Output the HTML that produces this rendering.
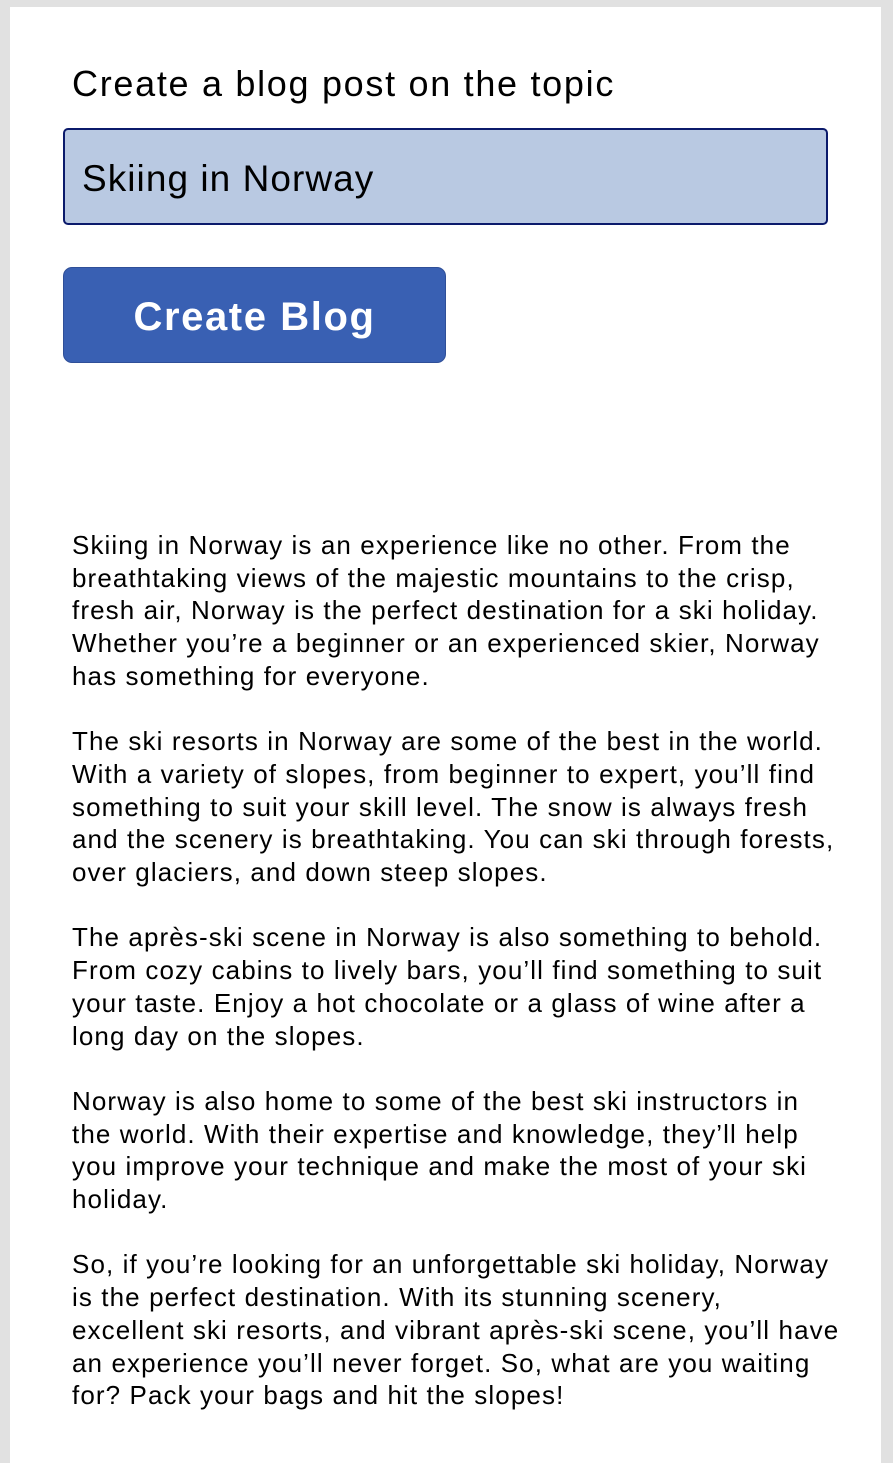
<!DOCTYPE html>
<html><head><meta charset="utf-8"><style>
html,body{margin:0;padding:0}
body{width:893px;height:1463px;background:#e1e1e1;position:relative;overflow:hidden;font-family:"Liberation Sans",sans-serif;color:#000}
.panel{position:absolute;left:10px;top:7px;width:871px;height:1456px;background:#fff}
.title{position:absolute;left:72px;top:62px;font-size:36px;line-height:44px;white-space:nowrap;letter-spacing:1.7px}
.input{position:absolute;left:63px;top:128px;width:761px;height:93px;border:2px solid #0b1a6b;border-radius:5px;background:#b9c9e2}
.input span{position:absolute;left:17px;top:27px;font-size:37px;line-height:44px;letter-spacing:1.05px;white-space:nowrap}
.btn{position:absolute;left:63px;top:267px;width:381px;height:94px;border:1px solid #2f4f98;border-radius:9px;background:#3960b3;color:#fff;font-weight:bold;font-size:40px;line-height:98px;text-align:center;letter-spacing:1.6px}
.body{position:absolute;left:72px;top:529px;font-size:26px;line-height:32.7px;white-space:nowrap;letter-spacing:1.1px}
</style></head><body>
<div class="panel"></div>
<div class="title">Create a blog post on the topic</div>
<div class="input"><span>Skiing in Norway</span></div>
<div class="btn">Create Blog</div>
<div class="body">Skiing in Norway is an experience like no other. From the<br>breathtaking views of the majestic mountains to the crisp,<br>fresh air, Norway is the perfect destination for a ski holiday.<br>Whether you’re a beginner or an experienced skier, Norway<br>has something for everyone.<br><br>The ski resorts in Norway are some of the best in the world.<br>With a variety of slopes, from beginner to expert, you’ll find<br>something to suit your skill level. The snow is always fresh<br>and the scenery is breathtaking. You can ski through forests,<br>over glaciers, and down steep slopes.<br><br>The après-ski scene in Norway is also something to behold.<br>From cozy cabins to lively bars, you’ll find something to suit<br>your taste. Enjoy a hot chocolate or a glass of wine after a<br>long day on the slopes.<br><br>Norway is also home to some of the best ski instructors in<br>the world. With their expertise and knowledge, they’ll help<br>you improve your technique and make the most of your ski<br>holiday.<br><br>So, if you’re looking for an unforgettable ski holiday, Norway<br>is the perfect destination. With its stunning scenery,<br>excellent ski resorts, and vibrant après-ski scene, you’ll have<br>an experience you’ll never forget. So, what are you waiting<br>for? Pack your bags and hit the slopes!</div>
</body></html>
